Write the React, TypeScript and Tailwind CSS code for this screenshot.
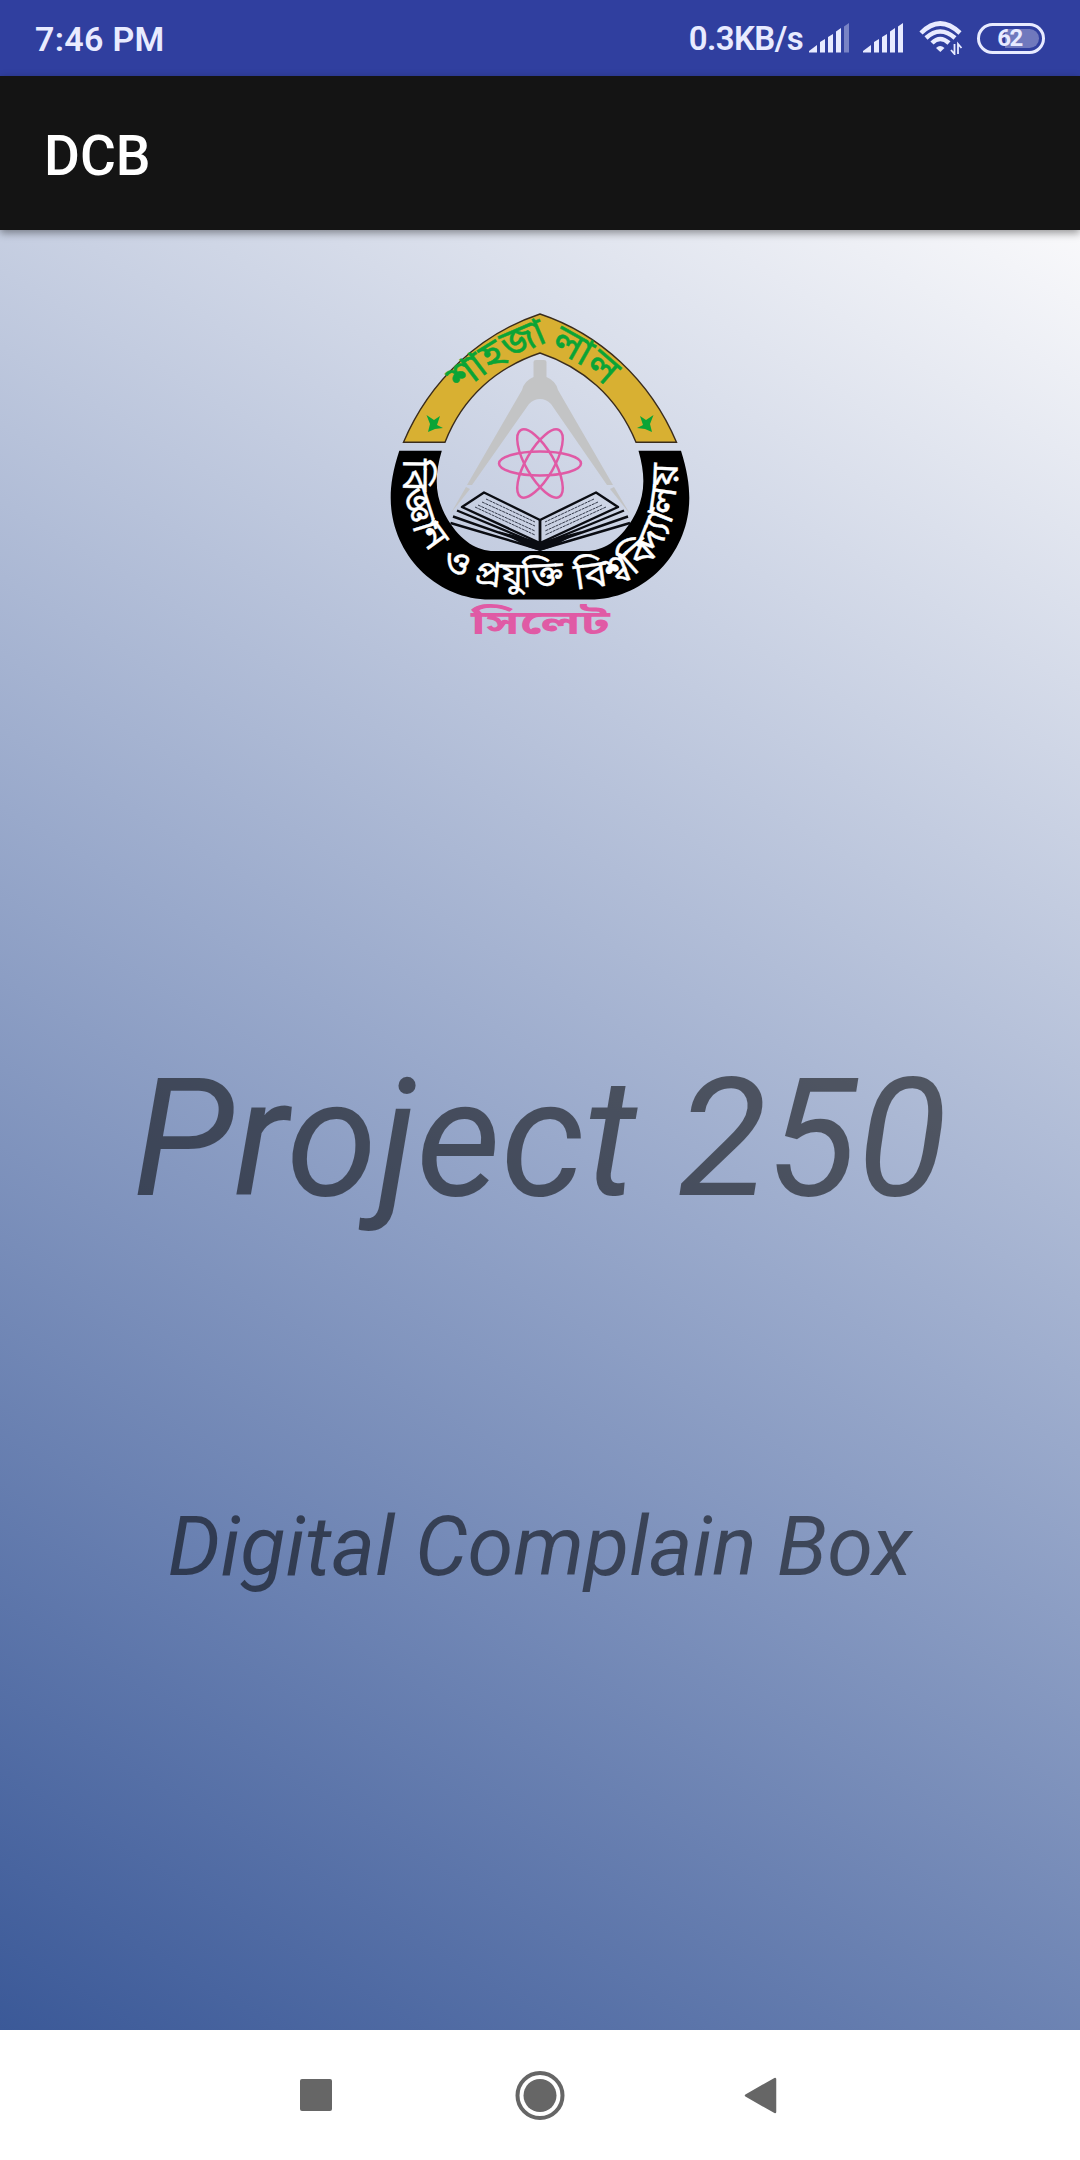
import React from "react";

const bn = "'Noto Sans Bengali','Noto Serif Bengali','Lohit Bengali','FreeSans','Noto Sans',sans-serif";

function Emblem() {
  return (
    <svg className="h-[350px] w-[320px]" viewBox="380 300 320 350" role="img">
      <defs>
        <path id="arch" d="M460 394C484 374 510 357 534 348Q541 345 550 349C580 361 607 384 634 420" />
        <path id="ringLeft" d="M404 459C400 505 410 535 446 568" />
        <path id="ringMid" d="M474 584Q520 590 580 583" />
        <path id="ringRight" d="M576 589C603 588 634 580 652 559C672 535 680 500 677 430" />
      </defs>
      <path
        d="M403.5 442.3C430 380 480 334 540 314C600 334 650 380 676.5 442.3H636C617 396 582 367 540 353C498 367 463 396 445 442.3Z"
        fill="#d8b032" stroke="#3a2c1c" strokeWidth="1.4"
      />
      <path
        d="M399.3 450.7H441.8C433 480 436 500 448 520C461 541 477 551 494 551H586C603 551 619 541 632 520C644 500 647 480 638.5 450.7H681C687 470 689.3 484 689.3 498C689.3 553 645 599.5 590 599.5H490C435 599.5 390.7 553 390.7 498C390.7 484 393 470 399.3 450.7Z"
        fill="#000"
      />
      <path
        d="M533.500 362Q533.500 360 536 360H544Q546.500 360 546.500 362V377Q556 381 558 390L613 485H607L551 404Q546 399 540 399Q534 399 529 404L472 485H467L522 390Q524 381 533.500 377Z"
        fill="#c3c4c5"
      />
      <path d="M466 487L470 489L451 513ZM614 487L610 489L630 514Z" fill="#c3c4c5" />
      <g fill="none" stroke="#e05aa5" strokeWidth="2.5">
        <ellipse cx="540" cy="463.5" rx="41" ry="12" />
        <ellipse cx="540" cy="463.5" rx="38.5" ry="14" transform="rotate(60 540 463.5)" />
        <ellipse cx="540" cy="463.5" rx="38.5" ry="14" transform="rotate(-60 540 463.5)" />
      </g>
      <g fill="none" stroke="#0a0c12" strokeWidth="2.4" strokeLinejoin="round">
        <path d="M484 492.5L540 520L596 492.5L618 507L540 543L462 507Z" />
        <path d="M540 520V549" strokeWidth="2.8" />
        <path d="M457 510.5L540 545L624 510.5M453 516.5L540 547L628 516.5M450.500 523L540 549.500L630 523" />
      </g>
      <path d="M498 531L540 542L582 531L552 547L540 551L528 547Z" fill="#0a0c12" />
      <g fill="none" stroke="#343a4a" strokeWidth="1" strokeDasharray="3 .7">
        <path d="M486 499L535 522M482 502L535 526M478 505L535 531M475 507L535 535M594 499L545 522M598 502L545 526M602 505L545 531M606 507L545 535" />
      </g>
      <path d="M426.500 415L434 420L440 416L437 425L443 428L435 429L428 432L430 424Z" fill="#0aa436" />
      <path d="M653.500 415L646 420L640 416L643 425L637 428L645 429L652 432L650 424Z" fill="#0aa436" />
      <g style={{ fontFamily: bn }}>
        <text fill="#0aa436" stroke="#0aa436" strokeWidth=".5" fontSize="39.500"><textPath href="#arch">শাহজালাল</textPath></text>
        <g fill="#fff" stroke="#fff" strokeWidth=".4" fontSize="37.500">
          <text><textPath href="#ringLeft">বিজ্ঞান</textPath></text>
          <text transform="translate(440.500 569) rotate(22)" fontSize="35">ও</text>
          <text fontSize="35"><textPath href="#ringMid">প্রযুক্তি</textPath></text>
          <text fontSize="38"><textPath href="#ringRight">বিশ্ববিদ্যালয়</textPath></text>
        </g>
        <text transform="translate(471 634) scale(1.46 .9)" fill="#e05aa5" fontSize="36" fontWeight="700">সিলেট</text>
      </g>
    </svg>
  );
}

function Signal({ weak = false }: { weak?: boolean }) {
  return (
    <svg className="h-[30px] w-[41px]" viewBox="0 0 41 30" fill="#e8ebff">
      <path d="M0 29.500V28L8 22V29.500ZM11 19L16 16V29.500H11ZM19 14L24 11V29.500H19ZM27 8.500L32 5V29.500H27Z" />
      <path d="M35 3.500L40 0V29.500H35Z" opacity={weak ? 0.4 : 1} />
    </svg>
  );
}

function StatusBar() {
  return (
    <header className="flex h-[76px] shrink-0 items-center justify-between bg-[#303f9f] pl-[35px] pr-[35px] text-[34px] font-semibold text-[#e8ebff]">
      <span className="pt-[2px] leading-10 tracking-[0.3px]">7:46 PM</span>
      <div className="flex items-center">
        <span className="mr-[6px] pt-[2px] text-[33px] leading-10 tracking-[-0.6px]">0.3KB/s</span>
        <Signal weak />
        <span className="w-[13px]" />
        <Signal />
        <svg className="ml-[15px] h-[34px] w-[44px]" viewBox="0 0 44 34" fill="none" stroke="#e8ebff">
          <path d="M2 12Q21 -7 41 12" strokeWidth="4.500" />
          <path d="M7 17Q21 4 36 17" strokeWidth="4.500" />
          <path d="M13 22Q21 14 30 22" strokeWidth="4.500" />
          <path d="M17 27Q21 23 25.500 27L21.300 31Z" fill="#e8ebff" stroke="none" />
          <path d="M35.500 23V33L32 29M39 33V23L42.500 27" strokeWidth="1.8" />
        </svg>
        <div className="ml-[14px] flex h-[31px] w-[68px] rounded-full border-[3px] border-[#e8ebff] p-[3px]">
          <div className="flex flex-1 items-center justify-center rounded-full bg-linear-to-r from-transparent from-40% to-[#7079bd] to-40% pr-[3px] text-[24px] font-bold leading-none tracking-[-1.5px]">62</div>
        </div>
      </div>
    </header>
  );
}

export default function App() {
  return (
    <div className="flex h-[2160px] w-[1080px] flex-col overflow-hidden font-['Roboto',sans-serif]">
      <StatusBar />
      <div className="z-10 flex h-[154px] shrink-0 items-center bg-[#141414] pl-[44px] pt-[7px] text-[55px] font-medium text-white shadow-[0_3px_8px_rgba(0,0,0,0.4)]">
        DCB
      </div>
      <main className="flex h-[1800px] shrink-0 flex-col items-center bg-[linear-gradient(31deg,#3b5998_0%,#99a9cb_50%,#f9f9fb_100%)] pt-[70px]">
        <Emblem />
        <h1 className="mt-[392px] text-[165px] italic leading-[194px] text-black/54">Project 250</h1>
        <p className="mt-[262px] text-[83px] italic leading-[98px] text-black/54">Digital Complain Box</p>
      </main>
      <nav className="flex flex-1 items-center justify-center bg-white">
        <svg className="h-[50px] w-[480px]" viewBox="300 2070 480 50" fill="#666">
          <rect x="300" y="2079" width="32" height="32" rx="2" />
          <circle cx="540" cy="2095.500" r="16.500" />
          <circle cx="540" cy="2095.500" r="22.500" fill="none" stroke="#666" strokeWidth="4" />
          <path d="M775 2079V2112L746 2095.500Z" stroke="#666" strokeWidth="2.500" strokeLinejoin="round" />
        </svg>
      </nav>
    </div>
  );
}
